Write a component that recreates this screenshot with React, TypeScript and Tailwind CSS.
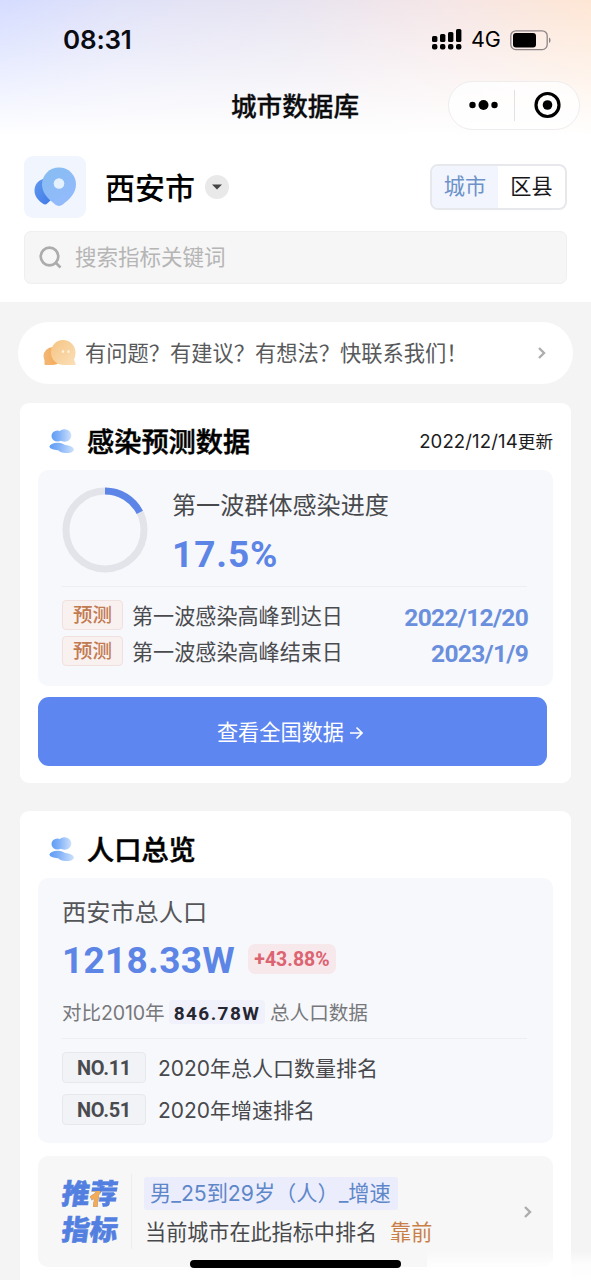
import type { ReactNode } from 'react';

const DIN = "font-['Roboto','Noto_Sans_CJK_SC',sans-serif] font-bold";

function SignalIcon() {
  const heights = [6, 8, 10, 13];
  return (
    <svg width="30" height="22" viewBox="0 0 30 22">
      {heights.map((h, i) => (
        <g key={h}>
          <rect x={i * 8} y={13 - h} width="5.4" height={h} rx="1.6" />
          <rect x={i * 8} y="15" width="5.4" height="5.6" rx="2" />
        </g>
      ))}
    </svg>
  );
}

function BatteryIcon() {
  return (
    <svg width="42" height="21" viewBox="0 0 42 21">
      <rect x="0.8" y="0.8" width="36.4" height="18.8" rx="5" fill="none" stroke="#8d8488" strokeWidth="1.3" />
      <rect x="3" y="3" width="23" height="14.4" rx="3" />
      <path d="M39 7.5c2 .8 2 4.700 0 5.500z" fill="#8d8488" />
    </svg>
  );
}

function PinIcon() {
  return (
    <svg width="42" height="42" viewBox="0 0 42 42">
      <defs>
        <linearGradient id="pinFront" x1="0" y1="0" x2="0.6" y2="1">
          <stop offset="0" stopColor="#86bdf1" />
          <stop offset="1" stopColor="#93bafc" />
        </linearGradient>
        <linearGradient id="pinBack" x1="0" y1="0" x2="1" y2="1">
          <stop offset="0" stopColor="#5f9aef" />
          <stop offset="1" stopColor="#4079e8" />
        </linearGradient>
      </defs>
      <path d="M11 12.500C5 13.500.5 18 .5 24.500c0 6 4 10 8.500 13.200 1.500 1 3 .9 4.200-.2L18 33V14z" fill="url(#pinBack)" />
      <path
        d="M25 1.500C15.500 1.500 8 9 8 18.300c0 8.500 6 14.700 13.200 20.200 2.500 1.900 5.100 1.900 7.600 0C36 33 42 26.800 42 18.300 42 9 34.500 1.500 25 1.500z"
        fill="url(#pinFront)"
      />
      <circle cx="25" cy="17.500" r="5.300" fill="#e4f1ff" />
    </svg>
  );
}

function ChatIcon() {
  return (
    <svg width="34" height="28" viewBox="0 0 34 28">
      <defs>
        <linearGradient id="chatBack" x1="0" y1="0" x2="1" y2="0">
          <stop offset="0" stopColor="#f2b778" />
          <stop offset="1" stopColor="#f6a648" />
        </linearGradient>
        <linearGradient id="chatFront" x1="0" y1="0" x2="1" y2="1">
          <stop offset="0" stopColor="#f5c583" />
          <stop offset="1" stopColor="#fbdfb8" />
        </linearGradient>
      </defs>
      <ellipse cx="10" cy="17" rx="9.500" ry="9" fill="url(#chatBack)" />
      <path d="M1.500 18.500v6c0 1 .4 1.500 1.200 1.500H10z" fill="#f3b470" />
      <path
        d="M20 1C13 1 8 6.500 8 13.500 8 18 10.500 22 14 24.300c2 1.200 4 1.700 6 1.700h11.500c1 0 1.500-.8 1-1.600L31 20.500c1-2 1.500-4.500 1.500-7C32.500 6.500 27 1 20 1z"
        fill="url(#chatFront)"
      />
      <ellipse cx="20" cy="12.500" rx="1.200" ry="1.600" fill="#fff0d8" />
      <ellipse cx="25.500" cy="12.500" rx="1.200" ry="1.600" fill="#fff0d8" />
    </svg>
  );
}

function PeopleIcon({ id }: { id: string }) {
  return (
    <svg width="26" height="26" viewBox="0 0 26 26">
      <defs>
        <linearGradient id={`${id}Back`} x1="0" y1="0" x2="1" y2="0">
          <stop offset="0" stopColor="#5f9df4" />
          <stop offset="1" stopColor="#94bdf9" />
        </linearGradient>
        <linearGradient id={`${id}Front`} x1="0" y1="0" x2="1" y2="0">
          <stop offset="0" stopColor="#78acf7" />
          <stop offset="1" stopColor="#cde0fd" />
        </linearGradient>
      </defs>
      <ellipse cx="8.500" cy="8" rx="6" ry="5.500" fill={`url(#${id}Back)`} />
      <ellipse cx="15.500" cy="7.500" rx="6.800" ry="6.200" fill={`url(#${id}Front)`} />
      <ellipse cx="8.500" cy="18.500" rx="8" ry="3.700" fill={`url(#${id}Back)`} />
      <ellipse cx="16.500" cy="21" rx="8.500" ry="4" fill={`url(#${id}Front)`} transform="rotate(6 17 21)" />
    </svg>
  );
}

function ChevronRight() {
  return (
    <svg width="10" height="14" viewBox="0 0 10 14" fill="none" stroke="#adadad" strokeWidth="2.400">
      <path d="M2 2 7 7 2 12" />
    </svg>
  );
}

function ProgressRing({ percent }: { percent: number }) {
  const r = 39;
  const length = 2 * Math.PI * r;
  return (
    <svg width="86" height="86" viewBox="0 0 86 86" fill="none" strokeWidth="7">
      <circle cx="43" cy="43" r={r} stroke="#e2e4e9" />
      <circle
        cx="43"
        cy="43"
        r={r}
        stroke="#5d85e8"
        strokeDasharray={`${(length * percent) / 100} ${length}`}
        transform="rotate(-90 43 43)"
      />
    </svg>
  );
}

function SectionTitle({ id, title, children }: { id: string; title: string; children?: ReactNode }) {
  return (
    <div className="flex h-[67px] items-center pt-[9px] pl-[11px]">
      <PeopleIcon id={id} />
      <h2 className="ml-[12px] pt-[4px] text-[27.200px] leading-none font-medium text-black [-webkit-text-stroke:0.500px_#000]">{title}</h2>
      {children}
    </div>
  );
}

function ForecastRow({ label, date }: { label: string; date: string }) {
  return (
    <div className="flex h-[36px] items-center">
      <span className="flex h-[30px] w-[61px] items-center justify-center rounded-[4px] border border-[#f0e1de] bg-[#f8f1f0] pt-[2px] text-[19.500px] leading-none font-medium text-[#c27a50]">
        预测
      </span>
      <span className="ml-[9px] pt-[4px] text-[21.100px] leading-none text-[#4a4b4e]">{label}</span>
      <span className={`${DIN} -mr-px ml-auto pt-[6px] text-[24.500px] leading-none tracking-[-0.700px] text-[#6a8fdc]`}>{date}</span>
    </div>
  );
}

function RankRow({ rank, label }: { rank: string; label: string }) {
  return (
    <div className="flex h-[42px] items-center">
      <span className={`${DIN} flex h-[31px] w-[84px] items-center justify-center rounded-[4px] border border-[#e7e8ec] bg-[#f2f3f6] pt-[2px] text-[20px] leading-none tracking-[-0.300px] text-[#4a4b50]`}>
        {rank}
      </span>
      <span className="ml-[12px] pt-[2px] text-[21px] leading-none text-[#48494c]">{label}</span>
    </div>
  );
}

export default function App() {
  return (
    <div className="relative flex h-[1280px] w-[591px] flex-col overflow-hidden bg-[#f4f4f4] font-['Inter','Noto_Sans_CJK_SC',sans-serif] whitespace-nowrap">
      <header className="h-[302px] shrink-0 bg-white">
        <div className="h-[136px] bg-[linear-gradient(90deg,#d5dcff_0%,#e0e2f8_20%,#e8e4f0_50%,#f5e6e7_75%,#fee6d4_100%)]">
          <div className="h-full bg-linear-to-b from-white/0 via-white/50 to-white">
            <div className="flex h-[80px] items-center pr-[39px] pl-[63px]">
              <span className="text-[26px] leading-none font-semibold tracking-[-0.200px] text-[#0b0b12]">08:31</span>
              <span className="ml-auto flex items-center">
                <SignalIcon />
                <span className="ml-[9px] w-[30px] text-[21.500px] leading-none tracking-[-0.200px]">4G</span>
                <span className="ml-[9px]">
                  <BatteryIcon />
                </span>
              </span>
            </div>
            <div className="flex h-[50px] items-center">
              <h1 className="ml-[231px] pt-[3px] text-[25.600px] leading-none font-medium text-[#0c0c0f] [-webkit-text-stroke:0.300px_#0c0c0f]">城市数据库</h1>
              <div className="mr-[11px] ml-auto flex h-[49px] w-[132px] items-center rounded-full border border-[#efecee] bg-white/80">
                <svg width="65" height="30" viewBox="0 0 65 30">
                  <circle cx="23.500" cy="15" r="3.200" />
                  <circle cx="34.500" cy="15" r="5" />
                  <circle cx="45.500" cy="15" r="3.200" />
                </svg>
                <span className="h-[31px] w-px bg-[#e2e0e2]" />
                <svg width="64" height="30" viewBox="0 0 64 30">
                  <circle cx="32.500" cy="15" r="11.500" fill="none" stroke="#000" strokeWidth="3.200" />
                  <circle cx="32.500" cy="15" r="4.800" />
                </svg>
              </div>
            </div>
          </div>
        </div>

        <div className="mt-[20px] flex h-[62px] items-center pr-[24px] pl-[24px]">
          <span className="flex h-[62px] w-[62px] items-center justify-center rounded-[9px] bg-[#f1f5fe]">
            <PinIcon />
          </span>
          <span className="ml-[19px] pt-[2px] text-[30px] leading-none font-medium text-black">西安市</span>
          <span className="ml-[10px] flex h-[24px] w-[24px] items-center justify-center rounded-full bg-[#e9e9e9]">
            <svg width="10" height="6" viewBox="0 0 10 6">
              <path d="M0 .5h10L5 5.500z" fill="#454545" />
            </svg>
          </span>
          <div className="ml-auto flex h-[46px] w-[137px] overflow-hidden rounded-[8px] border-2 border-[#e6e8ec] text-[21.200px] leading-none">
            <span className="flex w-[66px] items-center justify-center bg-[#f2f5fe] text-[#6c92c9]">城市</span>
            <span className="flex flex-1 items-center justify-center text-[#17171a]">区县</span>
          </div>
        </div>

        <div className="mx-[24px] mt-[13px] flex h-[53px] items-center rounded-[7px] border border-[#efefef] bg-[#f6f6f6] pl-[14px]">
          <svg width="24" height="24" viewBox="0 0 24 24" fill="none" stroke="#acacac" strokeWidth="2.700">
            <circle cx="10.500" cy="10.500" r="8.800" />
            <path d="m17 17 4.500 4.500" />
          </svg>
          <span className="ml-[12px] pt-[1px] text-[21.500px] leading-none text-[#b5b5b5]">搜索指标关键词</span>
        </div>
      </header>

      <div className="mt-[20px] mr-[18px] ml-[18px] flex h-[62px] shrink-0 items-center rounded-full bg-white pr-[26px] pl-[25px]">
        <ChatIcon />
        <span className="ml-[8px] pt-[2px] text-[21.250px] leading-none text-[#58595b]">有问题？有建议？有想法？快联系我们！</span>
        <span className="ml-auto">
          <ChevronRight />
        </span>
      </div>

      <section className="mx-[20px] mt-[19px] h-[380px] shrink-0 rounded-[9px] bg-white px-[18px]">
        <SectionTitle id="peopleForecast" title="感染预测数据">
          <span className="ml-auto flex items-baseline text-[18.600px] leading-none tracking-[0.100px] text-[#1c1c1e]">
            2022/12/14
            <span className="text-[17.600px] tracking-normal">更新</span>
          </span>
        </SectionTitle>
        <div className="h-[216px] rounded-[10px] bg-[#f7f8fc] px-[24px] pt-[17px]">
          <div className="flex h-[99px]">
            <ProgressRing percent={17.5} />
            <div className="ml-[24px] flex flex-col">
              <span className="mt-[7px] text-[24.100px] leading-none text-[#48494c]">第一波群体感染进度</span>
              <span className={`${DIN} mt-[18px] text-[37px] leading-none tracking-[0.900px] text-[#5c85e6]`}>17.5%</span>
            </div>
          </div>
          <div className="mr-[2px] border-t border-[#eceef2] pt-[10px]">
            <ForecastRow label="第一波感染高峰到达日" date="2022/12/20" />
            <ForecastRow label="第一波感染高峰结束日" date="2023/1/9" />
          </div>
        </div>
        <button className="mt-[11px] flex h-[69px] w-[509px] items-center justify-center rounded-[11px] bg-[#5d86f0] pt-[2px] pr-[5px] text-[21.200px] leading-none text-white">
          查看全国数据
          <svg className="ml-[6px]" width="13" height="14" viewBox="0 0 13 14" fill="none" stroke="#fff" strokeWidth="1.600">
            <path d="M0 7h12M6.500 1.500 12 7l-5.500 5.500" />
          </svg>
        </button>
      </section>

      <section className="mx-[20px] mt-[28px] h-[480px] shrink-0 rounded-[9px] bg-white px-[18px]">
        <SectionTitle id="peopleTotal" title="人口总览" />
        <div className="h-[265px] rounded-[10px] bg-[#f7f8fc] px-[24px] pt-[23px]">
          <div className="text-[24.200px] leading-none text-[#55565a]">西安市总人口</div>
          <div className="mt-[13px] flex h-[42px] items-center">
            <span className={`${DIN} pt-[3px] text-[37px] leading-none tracking-[0.300px] text-[#5c85e6]`}>1218.33W</span>
            <span className={`${DIN} ml-auto mr-[193px] flex h-[30px] w-[88px] items-center justify-center rounded-[7px] bg-[#f7e8ec] pt-[2px] text-[19.500px] leading-none text-[#dc6370]`}>
              +43.88%
            </span>
          </div>
          <div className="mt-[19px] flex h-[26px] items-center text-[19.600px] leading-none text-[#77787b]">
            <span className="w-[107px] pt-[3px] tracking-[-0.150px]">对比2010年</span>
            <span className={`${DIN} flex h-[24px] w-[96px] items-center justify-center rounded-[4px] bg-[#f0f1fb] pt-[2px] text-[19px] leading-none tracking-[1.400px] text-[#252632]`}>
              846.78W
            </span>
            <span className="ml-[5px] pt-[3px]">总人口数据</span>
          </div>
          <div className="mt-[13px] mr-[2px] border-t border-[#eceef2] pt-[7px]">
            <RankRow rank="NO.11" label="2020年总人口数量排名" />
            <RankRow rank="NO.51" label="2020年增速排名" />
          </div>
        </div>

        <div className="mt-[13px] flex h-[111px] items-center rounded-[10px] bg-[#f7f7f7] pr-[20px] pl-[24px]">
          <div className="pt-px text-[28px] leading-[36px] font-black text-[#5380e0]">
            <div className="-skew-x-8 [-webkit-text-stroke:0.500px_#5380e0]">
              推
              <span className="bg-[linear-gradient(#f3ab55,#f3ab55),linear-gradient(#5380e0,#5380e0)] bg-[length:36%_58%,100%_100%] bg-[position:0_100%,0_0] bg-clip-text bg-no-repeat text-transparent [-webkit-text-stroke:0.500px_transparent]">
                荐
              </span>
            </div>
            <div className="-skew-x-8 [-webkit-text-stroke:0.500px_#5380e0]">指标</div>
          </div>
          <div className="ml-[13px] h-[75px] w-px bg-[#ededed]" />
          <div className="ml-[12px]">
            <div className="flex h-[33px] w-[254px] items-center rounded-[3px] bg-[#ebedfc] pt-px pl-[6px] text-[21.200px] leading-none text-[#5d87c9]">
              男_25到29岁（人）_增速
            </div>
            <div className="mt-[12px] mb-[3px] pl-px text-[21.100px] leading-none text-[#48494c]">
              当前城市在此指标中排名
              <span className="ml-[13px] text-[#c87f48]">靠前</span>
            </div>
          </div>
          <span className="ml-auto">
            <ChevronRight />
          </span>
        </div>
      </section>

      <div className="absolute right-0 bottom-0 h-[30px] w-[164px] bg-linear-to-b from-white/0 via-white/80 to-white/90" />
      <div className="absolute bottom-[12px] left-[190px] h-[8px] w-[211px] rounded-full bg-black" />
    </div>
  );
}
